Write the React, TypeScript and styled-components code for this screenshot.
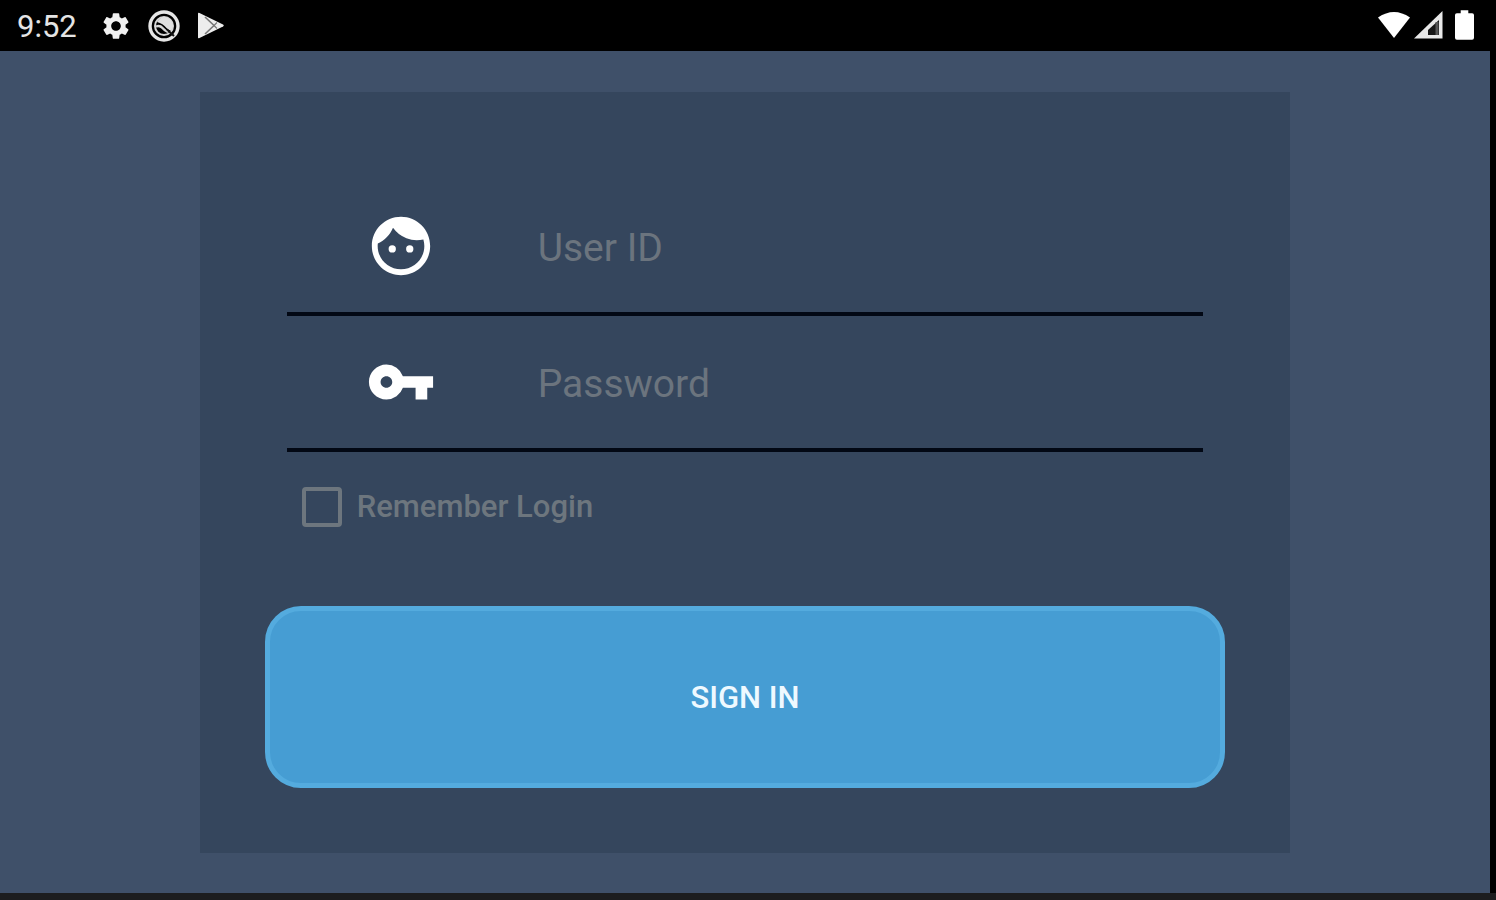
import React, { useState } from "react";
import styled, { createGlobalStyle } from "styled-components";
import { MdFace, MdSettings, MdVpnKey } from "react-icons/md";

const GlobalStyle = createGlobalStyle`
  *, *::before, *::after { box-sizing: border-box; }
  body {
    margin: 0;
    background: #000;
    font-family: Roboto, "Liberation Sans", sans-serif;
  }
`;

const Screen = styled.div`
  min-height: 100vh;
  display: flex;
  flex-direction: column;
`;

const StatusBar = styled.header`
  height: 51px;
  padding: 0 22px 0 17px;
  display: flex;
  align-items: center;
  justify-content: space-between;
  background: #000;
  color: #f1f1f1;
`;

const StatusGroup = styled.div`
  display: flex;
  align-items: center;

  svg {
    display: block;
  }
`;

const Notifications = styled(StatusGroup)`
  gap: 16px;
`;

const Indicators = styled(StatusGroup)`
  gap: 3px;
  padding-bottom: 2px;

  svg:last-child {
    margin-left: 9px;
  }
`;

const Clock = styled.time`
  width: 67px;
  font-size: 31px;
  line-height: 36px;
  padding-top: 2px;
  color: #e4e4e4;
`;

const Page = styled.main`
  flex: 1;
  margin-right: 6px;
  padding: 41px 0 40px;
  display: flex;
  justify-content: center;
  background: #3f5069;
`;

const Card = styled.form`
  width: 73.2%;
  padding: 88px 65px 65px;
  display: flex;
  flex-direction: column;
  background: #35465d;
`;

const Field = styled.label`
  height: 136px;
  margin: 0 22px;
  padding-left: 79px;
  display: flex;
  align-items: center;
  gap: 102px;
  border-bottom: 4px solid #020814;
  color: #fff;

  svg {
    flex: none;
  }
`;

const TextInput = styled.input`
  flex: 1;
  min-width: 0;
  height: 60px;
  padding: 4px 0 0;
  border: 0;
  outline: 0;
  background: transparent;
  color: #dfe4ea;
  font: 400 39px/48px Roboto, "Liberation Sans", sans-serif;

  &::placeholder {
    color: #6b747e;
    opacity: 1;
  }
`;

const Remember = styled.label`
  margin: 35px 37px 0;
  display: flex;
  align-items: center;
  align-self: flex-start;
  gap: 15px;
  color: #6d767e;
  font-size: 31px;
  font-weight: 500;
  line-height: 40px;
`;

const CheckBox = styled.input`
  appearance: none;
  width: 40px;
  height: 40px;
  margin: 0;
  border: 4px solid #6d767e;
  border-radius: 4px;

  &:checked {
    background: #6d767e;
  }
`;

const SignInButton = styled.button`
  flex: 1;
  min-height: 120px;
  margin-top: 79px;
  padding: 2px 0 0;
  border: 5px solid #54abde;
  border-radius: 36px;
  background: #469dd3;
  color: #eef9ff;
  font: 500 31px/36px Roboto, "Liberation Sans", sans-serif;
  text-transform: uppercase;
`;

const BottomEdge = styled.footer`
  height: 7px;
  background: #1c1d1f;
`;

const SyncIcon = () => (
  <svg width="32" height="32" viewBox="0 0 32 32" aria-hidden="true">
    <circle cx="16" cy="16" r="14" fill="none" stroke="#e6e6e6" strokeWidth="3.4" />
    <circle cx="16" cy="16" r="9" fill="none" stroke="#d8d8d8" strokeWidth="2" />
    <path d="M9 12Q12 7 17 7Q23 8 25 15L23.500 20.500Q21 20.500 18.500 18Q15 13.500 9 12Z" fill="#e0e0e0" />
    <path d="M8 16.500Q12 15 14.500 18T20 22" fill="none" stroke="#d8d8d8" strokeWidth="2.400" />
    <path d="M19 19.500L26 26" stroke="#111" strokeWidth="2" />
  </svg>
);

const PlayIcon = () => (
  <svg width="28" height="28" viewBox="-1 0 28 28" aria-hidden="true">
    <path d="M1 1.500Q1 .3 2.500 1L26 12.500Q27.500 13.500 26 14.500L2.500 26Q1 26.700 1 25.500Z" fill="#ededed" />
    <path d="M8 5l9 8.500L8 22" fill="none" stroke="#777" strokeWidth="1.600" />
    <path d="M17 13.500l3-3M17 13.500l3 3" fill="none" stroke="#777" strokeWidth="1.200" />
  </svg>
);

const WifiIcon = () => (
  <svg width="34" height="28" viewBox="0 0 34 28" aria-hidden="true">
    <path d="M1 6.500Q17-4.500 33 6.500L17 27Z" fill="#fff" />
  </svg>
);

const SignalIcon = () => (
  <svg width="29" height="28" viewBox="0 0 29 28" aria-hidden="true">
    <path d="M28.500 0V27.500H0Z" fill="#e8e8e8" />
    <path d="M25 9V24H14V19Z" fill="#161616" />
    <path d="M23 11V24" stroke="#555" strokeWidth="3" />
  </svg>
);

const BatteryIcon = () => (
  <svg width="19" height="30" viewBox="0 0 20 31" aria-hidden="true">
    <path d="M6 0H14V3H18Q20 3 20 5V29Q20 31 18 31H2Q0 31 0 29V5Q0 3 2 3H6Z" fill="#fff" />
  </svg>
);

export default function App() {
  const [remember, setRemember] = useState(false);

  return (
    <Screen>
      <GlobalStyle />
      <StatusBar>
        <Notifications>
          <Clock>9:52</Clock>
          <MdSettings size={32} aria-hidden="true" />
          <SyncIcon />
          <PlayIcon />
        </Notifications>
        <Indicators>
          <WifiIcon />
          <SignalIcon />
          <BatteryIcon />
        </Indicators>
      </StatusBar>
      <Page>
        <Card onSubmit={(event: React.FormEvent) => event.preventDefault()}>
          <Field>
            <MdFace size={70} aria-hidden="true" />
            <TextInput type="text" placeholder="User ID" aria-label="User ID" />
          </Field>
          <Field>
            <MdVpnKey size={70} aria-hidden="true" />
            <TextInput type="password" placeholder="Password" aria-label="Password" />
          </Field>
          <Remember>
            <CheckBox
              type="checkbox"
              checked={remember}
              onChange={(event) => setRemember(event.target.checked)}
            />
            Remember Login
          </Remember>
          <SignInButton type="submit">Sign in</SignInButton>
        </Card>
      </Page>
      <BottomEdge />
    </Screen>
  );
}
